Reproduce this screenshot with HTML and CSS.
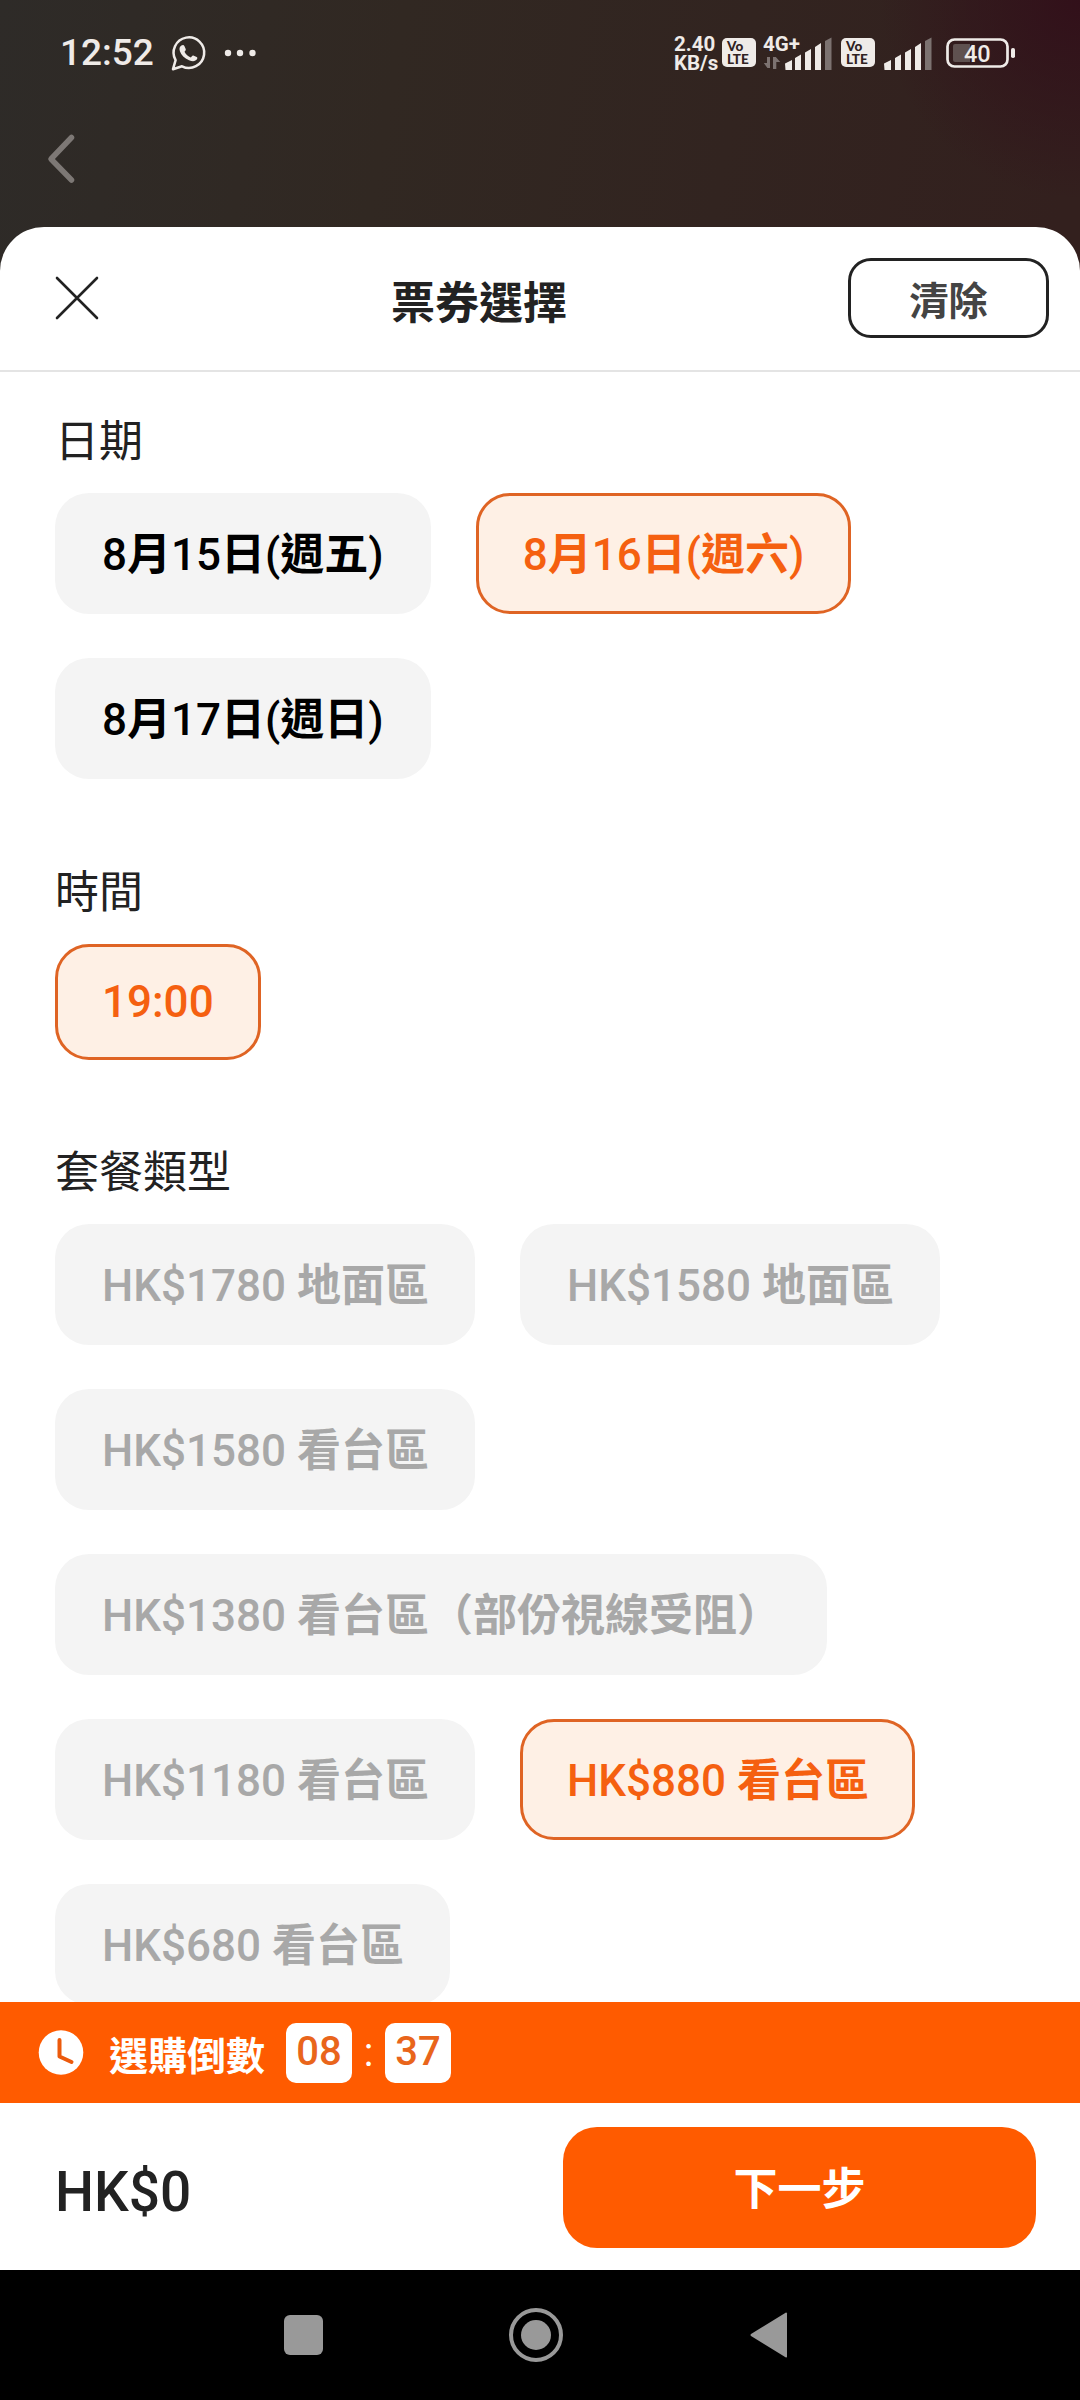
FILE: index.html
```html
<!DOCTYPE html>
<html lang="zh-Hant">
<head>
<meta charset="utf-8">
<title>票券選擇</title>
<link rel="stylesheet" href="styles.css">
</head>
<body>
<div class="screen">
  <div class="status">
    <span class="clock">12:52</span>
    <svg class="whatsapp" width="36" height="36" viewBox="0 0 36 36"><path d="M2 34.200 4.600 25.200A15.300 15.300 0 1 1 11 31.300Z" fill="none" stroke="#efebe8" stroke-width="2.500" stroke-linejoin="round"/><path d="M10.400 10.500c1.400-1 2.500-.7 3.100.7l1.200 2.800c.3.800-.1 1.500-1.200 2.700 1.500 2.800 3.500 4.600 6.400 5.700 1.500-1.800 2-2.100 2.900-1.700l2.900 1.400c1.100.5.7 1.800-.2 2.700-1.700 1.700-4.200 1.700-7.500.4-4.600-2-7.800-5.300-9.100-9-.9-2.600-.3-4.600 1.500-5.700Z" fill="#efebe8"/></svg>
    <svg class="more" width="32" height="8" viewBox="0 0 32 8"><g fill="#efebe8"><circle cx="4" cy="4" r="3.200"/><circle cx="16" cy="4" r="3.200"/><circle cx="28.500" cy="4" r="3.200"/></g></svg>
    <div class="system">
      <div class="speed"><span>2.40</span><span>KB/s</span></div>
      <div class="volte"><span>Vo</span><span>LTE</span></div>
      <svg class="signal-data" width="70" height="34" viewBox="0 0 70 34"><text class="net" x="0" y="15">4G+</text><g fill="#7c7270"><path d="M7 21v11h-2.600l-3.600-5h3.200v-6zM10 33v-12h2.800l4.500 5h-4v7z"/></g><g fill="#efebe8"><path d="M22 27.500l7-3.500v10h-6.500zM32 22l6-3.500v15.500h-6zM42 16.500l6-3.500v21h-6zM52 11l6-4v27h-6z"/></g><path d="M62 5l6.500-3.500v32.500h-6.500z" fill="#7c7270"/></svg>
      <div class="volte volte-b"><span>Vo</span><span>LTE</span></div>
      <svg class="signal" width="48" height="34" viewBox="0 0 48 34"><g fill="#efebe8"><path d="M0 27.500l7-3.500v10h-6.500zM11 22l6-3.500v15.500h-6zM21 16.500l6-3.500v21h-6zM31 11l6-4v27h-6z"/></g><path d="M41 5l6.500-3.500v32.500h-6.500z" fill="#7c7270"/></svg>
      <svg class="battery" width="70" height="30" viewBox="0 0 70 30"><rect x="1.500" y="1.500" width="60" height="27" rx="7" fill="none" stroke="#efebe8" stroke-width="2.700"/><path d="M9 6h15v18h-15q-2 0-2-2v-14q0-2 2-2z" fill="#5f5150"/><rect x="65" y="10" width="4" height="10" rx="1.800" fill="#efebe8"/><text class="level" x="18" y="23.500">40</text></svg>
    </div>
  </div>
  <div class="topbar"><svg width="30" height="50" viewBox="0 0 30 50"><path d="M24.500 3.500 4 25 24.500 46" fill="none" stroke="#7d7875" stroke-width="5.500" stroke-linecap="round" stroke-linejoin="round"/></svg></div>
  <main class="sheet">
    <header class="head">
      <svg class="close" width="44" height="44" viewBox="0 0 44 44"><path d="M2 2 42 42M42 2 2 42" stroke="#222" stroke-width="2.600" stroke-linecap="round"/></svg>
      <h1 class="title">票券選擇</h1>
      <button class="clear">清除</button>
    </header>
    <div class="content">
      <section class="group">
        <h2 class="label">日期</h2>
        <div class="chips">
          <button class="chip">8<b>月</b>15<b>日</b>(<b>週五</b>)</button>
          <button class="chip selected">8<b>月</b>16<b>日</b>(<b>週六</b>)</button>
          <button class="chip">8<b>月</b>17<b>日</b>(<b>週日</b>)</button>
        </div>
      </section>
      <section class="group">
        <h2 class="label">時間</h2>
        <div class="chips"><button class="chip time selected">19:00</button></div>
      </section>
      <section class="group packages">
        <h2 class="label">套餐類型</h2>
        <div class="chips">
          <button class="chip off">HK$1780 <b>地面區</b></button>
          <button class="chip off">HK$1580 <b>地面區</b></button>
          <button class="chip off">HK$1580 <b>看台區</b></button>
          <button class="chip off">HK$1380 <b>看台區（部份視線受阻）</b></button>
          <button class="chip off">HK$1180 <b>看台區</b></button>
          <button class="chip selected">HK$880 <b>看台區</b></button>
          <button class="chip off">HK$680 <b>看台區</b></button>
        </div>
      </section>
    </div>
    <div class="timer">
      <svg width="46" height="46" viewBox="0 0 46 46"><circle cx="23" cy="22.500" r="22.300" fill="#fff"/><path d="M21.500 10v16.500l12 5.500" fill="none" stroke="#ec5a0c" stroke-width="4" stroke-linecap="round" stroke-linejoin="round"/></svg>
      <span class="timer-label">選購倒數</span>
      <span class="digits">08</span><span class="colon">:</span><span class="digits">37</span>
    </div>
    <footer class="checkout">
      <span class="total">HK$0</span>
      <button class="next">下一步</button>
    </footer>
  </main>
  <nav class="sysnav">
    <svg width="40" height="56" viewBox="0 0 40 56"><rect x="0" y="8" width="39" height="40" rx="6" fill="#999"/></svg>
    <svg width="56" height="56" viewBox="0 0 56 56"><circle cx="27" cy="28" r="25" fill="none" stroke="#999" stroke-width="4"/><circle cx="27" cy="28" r="15" fill="#999"/></svg>
    <svg width="38" height="56" viewBox="0 0 38 56"><path d="M36 5.500q1 0 1 1v43q0 1.500-1.500.8L1 29q-1-1 0-2z" fill="#999"/></svg>
  </nav>
</div>
</body>
</html>
```
FILE: styles.css
```css
* { box-sizing: border-box; }
body { margin: 0; font-family: Roboto, "Noto Sans CJK TC", sans-serif; color: #222; }
button { border: 0; margin: 0; padding: 0; font: inherit; color: inherit; background: none; }
h1, h2 { margin: 0; }
svg { display: block; flex: none; overflow: visible; }
.screen {
  width: 1080px; height: 2400px; overflow: hidden;
  display: flex; flex-direction: column;
  background: radial-gradient(circle at 1080px 0, #32101a 0, rgba(50, 16, 26, 0) 200px),
    linear-gradient(100deg, #2e2b28 0, #312822 400px, #33201e 1080px);
}

/* Phone status bar */
.status { height: 104px; flex: none; display: flex; align-items: center; padding: 4px 65px 0 60px; color: #efebe8; }
.clock { font-size: 37px; font-weight: 500; width: 111px; line-height: 44px; margin-top: -2px; }
.whatsapp { margin-top: -2px; }
.more { margin-left: 17px; margin-top: -3px; }
.system { display: flex; align-items: center; margin-left: auto; margin-top: -3px; }
.speed { display: flex; flex-direction: column; font-size: 20.500px; font-weight: 700; line-height: 19px; width: 48px; margin-top: 2px; }
.volte { width: 34px; height: 29px; border-radius: 5px; background: #efebe8; color: #30221f; display: flex; flex-direction: column; font: 900 13.500px/12.500px Lato, sans-serif; padding: 2px 0 0 5px; }
.signal-data { margin-left: 7px; }
.volte-b { margin-left: 8px; }
.signal { margin-left: 9px; }
.battery { margin-left: 14px; margin-right: -1px; }
.net { font-size: 20.500px; font-weight: 700; fill: #efebe8; }
.level { font-size: 23.500px; font-weight: 500; fill: #efebe8; }

.topbar { height: 123px; flex: none; padding: 34px 0 0 47px; }
.topbar svg { margin-top: 1px; }

/* Ticket sheet */
.topbar { padding-top: 33px; margin-top: -4px; height: 127px; }
.sheet { flex: none; height: 2043px; border-radius: 44px 44px 0 0; background: #fff; display: flex; flex-direction: column; overflow: hidden; }
.head { height: 145px; flex: none; border-bottom: 2px solid #e4e4e4; display: grid; grid-template-columns: 201px 1fr 201px; padding: 31px 31px 0 55px; align-items: start; }
.close { margin-top: 18px; }
.title { font-size: 44px; font-weight: 700; text-align: center; line-height: 80px; padding-top: 6px; padding-right: 146px; }
.clear { height: 80px; border: 3px solid #222; border-radius: 23px; font-size: 39px; font-weight: 700; color: #444; line-height: 74px; padding-top: 4px; }
.content { height: 1630px; flex: none; overflow: hidden; padding: 37px 0 0 55px; }
.group + .group { margin-top: 81px; }
.group + .packages { margin-top: 80px; }
.label { font-size: 44px; font-weight: 400; line-height: 64px; height: 84px; padding-top: 1px; }
.chips { display: flex; flex-wrap: wrap; gap: 44px 45px; padding-right: 60px; }
.chip { height: 121px; padding: 3px 47px 0; border-radius: 34px; background: #f4f4f4; color: #000; font-size: 44px; font-weight: 500; line-height: 118px; white-space: nowrap; }
.packages .chip { padding-right: 46px; padding-top: 4px; line-height: 117px; }
.chip.selected { background: #fef0e5; color: #f56010; border: 3px solid #df6424; padding: 3px 44px 0; line-height: 112px; }
.packages .chip.selected { padding: 4px 43px 0 44px; line-height: 111px; }
.chip.time { height: 116px; padding-top: 0; line-height: 110px; }
.chip.off { color: #a8a8a8; }

.timer { height: 101px; flex: none; background: #ff5b00; color: #fff; display: flex; align-items: center; padding-left: 38px; }
.timer-label { font-size: 39px; font-weight: 700; line-height: 60px; margin: 9px 21px 0 25px; }
.digits { width: 66px; height: 60px; border-radius: 10px; background: #fff; color: #e9651b; font-size: 40px; font-weight: 500; line-height: 57px; text-align: center; }
.colon { width: 33px; text-align: center; font-size: 40px; line-height: 50px; }

.checkout { height: 167px; flex: none; display: flex; justify-content: space-between; align-items: center; padding: 2px 44px 0 55px; }
.total { font-size: 55px; font-weight: 500; line-height: 64px; padding-top: 9px; }
.next { width: 473px; height: 121px; border-radius: 34px; background: #ff5b00; color: #fff; font-size: 44px; font-weight: 700; line-height: 116px; padding-top: 5px; }

.sysnav { flex: 1; background: #000; display: flex; align-items: center; justify-content: space-between; padding: 0 292px 0 284px; }
```
